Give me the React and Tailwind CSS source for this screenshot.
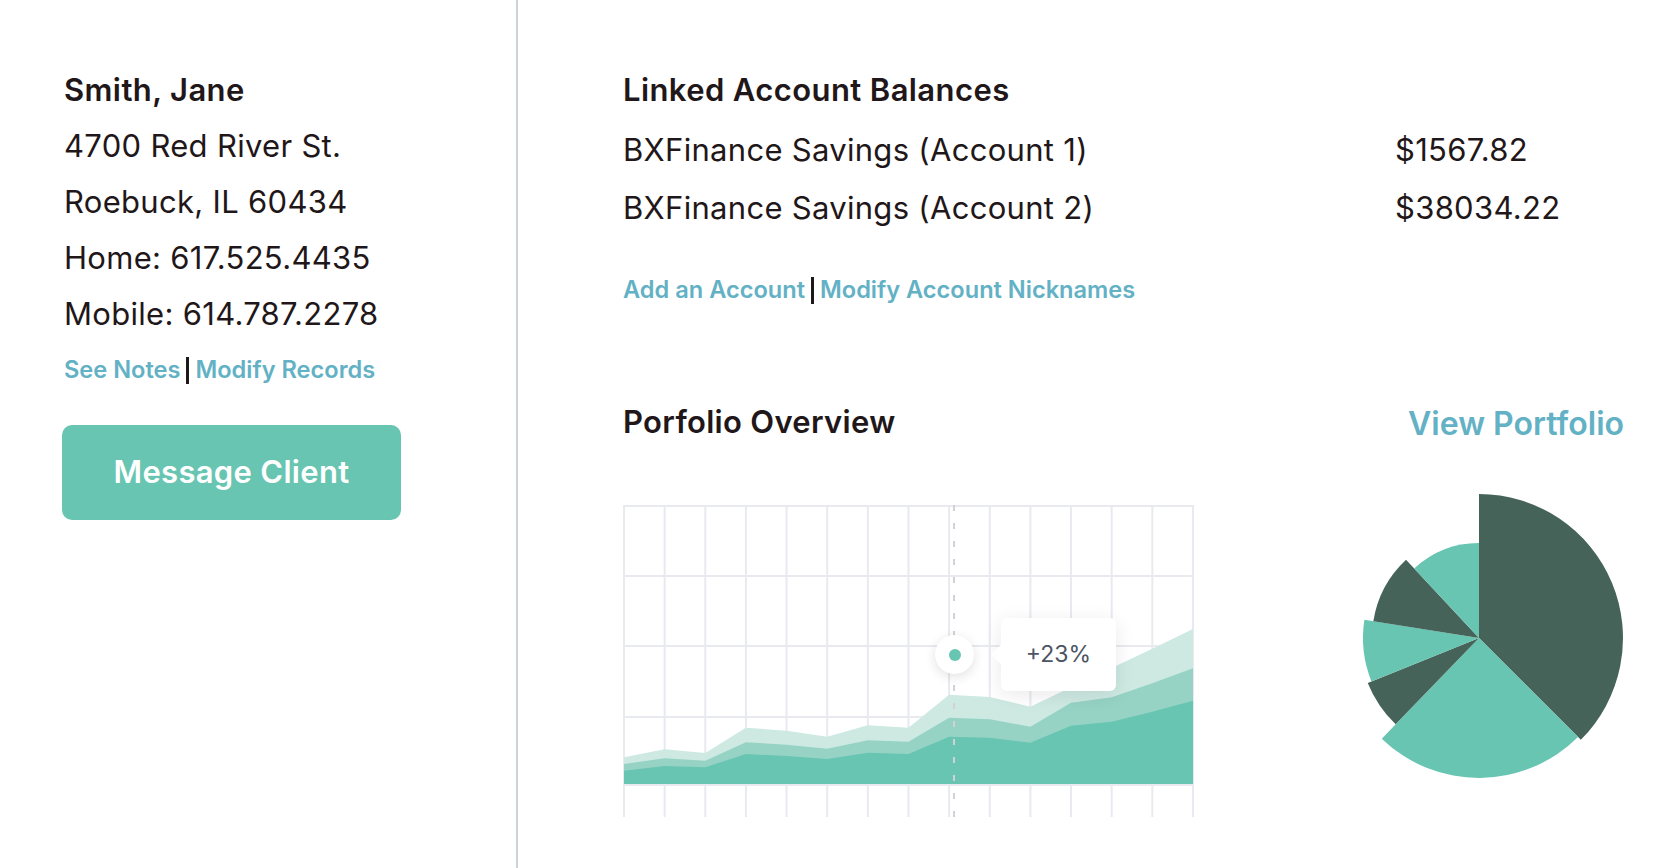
import React from 'react';

const INK = 'text-[#1f1719]';

const topLine = [252.3, 244.3, 248, 222.7, 225.7, 231.7, 220.3, 222.7, 189.7, 192, 201.7, 182.3, 163, 143.7, 124];
const midLine = [259, 253.3, 255.7, 237.3, 239.7, 243.7, 235.3, 236.7, 212.7, 214.3, 221.7, 197.7, 192.3, 178.3, 163.3];
const lowLine = [265.7, 261, 262.3, 249, 251, 254, 247.7, 249, 231.7, 232.7, 237.7, 220.7, 216.7, 206.7, 195.7];

const colX = (i) => 1 + i * 40.64;

function areaPath(ys) {
  const pts = ys.map((y, i) => `L${colX(i).toFixed(1)},${y}`).join(' ');
  return `M${colX(0)},279 ${pts} L${colX(ys.length - 1).toFixed(1)},279 Z`;
}

// pie slices: radius, start deg, end deg (clockwise from top)
const slices = [
  [144, 0, 135, '#46635a'],
  [140, 135, 224, '#67c5b2'],
  [120, 224, 248, '#46635a'],
  [116, 248, 279, '#67c5b2'],
  [107, 279, 317, '#46635a'],
  [95, 317, 360, '#67c5b2'],
];

function slicePath(r, a0, a1) {
  const cx = 145;
  const cy = 145;
  const p = (a) => {
    const rad = (a * Math.PI) / 180;
    return `${(cx + r * Math.sin(rad)).toFixed(2)},${(cy - r * Math.cos(rad)).toFixed(2)}`;
  };
  const large = a1 - a0 > 180 ? 1 : 0;
  return `M${cx},${cy} L${p(a0)} A${r},${r} 0 ${large} 1 ${p(a1)} Z`;
}

function LinkPair({ left, right }) {
  return (
    <div className="flex items-center text-[23.6px] leading-[32px] font-semibold text-[#63b1c5]">
      <a href="#" className="hover:underline">{left}</a>
      <span className="mx-[6px] inline-block h-[27px] w-[3px] bg-[#1f1719]" />
      <a href="#" className="hover:underline">{right}</a>
    </div>
  );
}

function AreaChart() {
  return (
    <div className="relative mt-[12px] h-[312px] w-[572px]">
      <svg width="572" height="312" viewBox="0 0 572 312">
        {Array.from({ length: 15 }).map((_, i) => (
          <line key={'v' + i} x1={colX(i)} x2={colX(i)} y1="0" y2="312" stroke="#e9e9f0" strokeWidth="2" />
        ))}
        {[1, 71, 141, 212, 280].map((y) => (
          <line key={'h' + y} x1="1" x2={colX(14)} y1={y} y2={y} stroke="#e9e9f0" strokeWidth="2" />
        ))}
        <path d={areaPath(topLine)} fill="#cde9e2" />
        <path d={areaPath(midLine)} fill="#96d3c5" />
        <path d={areaPath(lowLine)} fill="#68c5b1" />
        <line x1="331" x2="331" y1="0" y2="312" stroke="#d2d2d6" strokeWidth="2" strokeDasharray="6 12" />
      </svg>

      {/* hover marker */}
      <div className="absolute left-[312px] top-[130px] flex h-[39px] w-[39px] items-center justify-center rounded-full bg-white shadow-[0_3px_12px_rgba(0,0,0,0.12)]">
        <span className="h-[12px] w-[12px] rounded-full bg-[#68c5b1]" />
      </div>

      {/* tooltip */}
      <div className="absolute left-[378px] top-[113px] flex h-[73px] w-[115px] items-center justify-center rounded-[6px] bg-white shadow-[0_4px_20px_rgba(0,0,0,0.09)]">
        <span className="absolute left-[-7px] top-[29px] h-[15px] w-[15px] rotate-45 bg-white" />
        <span className="relative text-[23px] text-[#4b5563]">+23%</span>
      </div>
    </div>
  );
}

function PieChart() {
  return (
    <svg width="290" height="290" viewBox="0 0 290 290">
      {slices.map(([r, a0, a1, c], i) => (
        <path key={i} d={slicePath(r, a0, a1)} fill={c} />
      ))}
    </svg>
  );
}

export default function App() {
  return (
    <div className={`flex h-[868px] w-full bg-white [font-family:Inter,'Noto_Sans',sans-serif] ${INK}`}>
      {/* Client card */}
      <div className="w-[518px] shrink-0 border-r-2 border-[#cdd4d8] pl-[64px] pt-[62px]">
        <div className="text-[31px] leading-[56px] tracking-[0.3px]">
          <div className="font-semibold tracking-[0.4px]">Smith, Jane</div>
          <div>4700 Red River St.</div>
          <div>Roebuck, IL 60434</div>
          <div>Home: 617.525.4435</div>
          <div>Mobile: 614.787.2278</div>
        </div>
        <div className="mt-[12px]">
          <LinkPair left="See Notes" right="Modify Records" />
        </div>
        <button className="-ml-[2px] mt-[39px] flex h-[95px] w-[339px] items-center justify-center rounded-[10px] bg-[#68c5b1] text-[31px] font-semibold tracking-[0.3px] text-white">
          Message Client
        </button>
      </div>

      {/* Accounts and portfolio */}
      <div className="flex-1 pl-[105px] pr-[56px] pt-[62px]">
        <h2 className="text-[31px] font-semibold leading-[56px] tracking-[0.4px]">Linked Account Balances</h2>
        <div className="mt-[3px] text-[31px] leading-[58px] tracking-[0.3px]">
          <div className="grid grid-cols-[772px_1fr]">
            <span>BXFinance Savings (Account 1)</span>
            <span>$1567.82</span>
          </div>
          <div className="grid grid-cols-[772px_1fr]">
            <span>BXFinance Savings (Account 2)</span>
            <span>$38034.22</span>
          </div>
        </div>
        <div className="mt-[37px]">
          <LinkPair left="Add an Account" right="Modify Account Nicknames" />
        </div>

        <div className="mt-[94px] flex items-start justify-between">
          <h2 className="text-[31px] font-semibold leading-[44px] tracking-[0.3px]">Porfolio Overview</h2>
          <a href="#" className="mt-[2px] text-[32px] font-semibold leading-[44px] text-[#63b1c5]">
            View Portfolio
          </a>
        </div>

        <div className="mt-[47px] flex items-start justify-between">
          <AreaChart />
          <PieChart />
        </div>
      </div>
    </div>
  );
}
